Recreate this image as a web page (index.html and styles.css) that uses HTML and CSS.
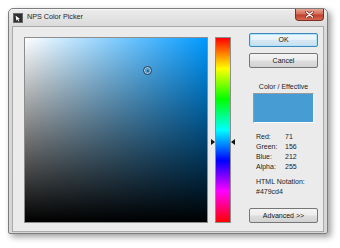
FILE: index.html
```html
<!DOCTYPE html>
<html>
<head>
<meta charset="utf-8">
<link rel="stylesheet" href="styles.css">
</head>
<body>
<div class="window">
  <div class="titlebar">
    <svg class="appicon" width="10" height="10" viewBox="0 0 10 10">
      <rect x="0" y="0" width="10" height="10" fill="#2e2e2e"/>
      <rect x="0.5" y="0.5" width="9" height="9" fill="none" stroke="#6a6a6a"/>
      <path d="M2.5 2.5 L7 6 L5.3 6.2 L6.3 8 L5.5 8.4 L4.5 6.6 L3.4 7.7 Z" fill="#ffffff"/>
    </svg>
    <span class="title">NPS Color Picker</span>
    <div class="close">
      <svg width="9" height="7" viewBox="0 0 9 7">
        <path d="M1.5 1 L7.5 6 M7.5 1 L1.5 6" stroke="#6b2018" stroke-width="2.6" stroke-linecap="round"/>
        <path d="M1.5 1 L7.5 6 M7.5 1 L1.5 6" stroke="#ffffff" stroke-width="1.4" stroke-linecap="round"/>
      </svg>
    </div>
  </div>
  <div class="client">
    <div class="field"><div class="cursor"></div></div>
    <div class="huecol">
      <div class="strip"></div>
      <span class="arrow arrow-left"></span>
      <span class="arrow arrow-right"></span>
    </div>
    <div class="panel">
      <button class="btn btn-default">OK</button>
      <button class="btn btn-cancel">Cancel</button>
      <div class="caption">Color / Effective</div>
      <div class="swatch"></div>
      <div class="values">
        <div class="row"><span class="lbl">Red:</span><span class="val">71</span></div>
        <div class="row"><span class="lbl">Green:</span><span class="val">156</span></div>
        <div class="row"><span class="lbl">Blue:</span><span class="val">212</span></div>
        <div class="row"><span class="lbl">Alpha:</span><span class="val">255</span></div>
      </div>
      <div class="notation">HTML Notation:</div>
      <div class="hex">#479cd4</div>
      <button class="btn btn-adv">Advanced &gt;&gt;</button>
    </div>
  </div>
</div>
</body>
</html>
```
FILE: styles.css
```css
html, body {
  margin: 0;
  padding: 0;
  background: #ffffff;
}
body {
  width: 340px;
  height: 248px;
  overflow: hidden;
  font-family: "Liberation Sans", Arial, sans-serif;
}
.window {
  box-sizing: border-box;
  margin: 8px 0 0 8px;
  width: 320px;
  height: 226px;
  border: 1px solid #7d7d7d;
  border-radius: 5px 5px 2px 2px;
  padding: 0 3px 1px 3px;
  background: linear-gradient(#ececec, #dadada 18px, #d6d6d6);
  box-shadow: 3px 3px 6px rgba(0, 0, 0, 0.38), inset 0 1px 0 #f8f8f8;
  display: flex;
  flex-direction: column;
}
.titlebar {
  height: 17px;
  display: flex;
  align-items: flex-start;
  margin: 0 -3px;
  padding-left: 4px;
}
.appicon {
  margin-top: 4px;
  flex: none;
}
.title {
  margin-left: 4px;
  margin-top: 4px;
  font-size: 7.2px;
  line-height: 8px;
  color: #1e1e1e;
}
.close {
  margin-left: auto;
  margin-right: 3px;
  width: 29px;
  height: 12px;
  box-sizing: border-box;
  border: 1px solid #7e2e22;
  border-top: none;
  border-radius: 0 0 4px 4px;
  background: linear-gradient(#e9a595, #d26d58 45%, #c0402c 55%, #d46a50);
  display: flex;
  align-items: center;
  justify-content: center;
}
.client {
  flex: 1;
  box-sizing: border-box;
  border: 1px solid #a9a9a9;
  background: #ebebeb;
  display: flex;
  align-items: flex-start;
  padding: 6px 5px 0 11px;
}
.field {
  position: relative;
  box-sizing: border-box;
  flex: none;
  width: 184px;
  height: 186px;
  margin-top: 4px;
  border: 1px solid #8d8d8d;
  background:
    linear-gradient(to top, #000000, rgba(0, 0, 0, 0)),
    linear-gradient(to right, #ffffff, #0099ff);
}
.cursor {
  position: absolute;
  left: 118px;
  top: 28px;
  width: 9px;
  height: 9px;
  box-sizing: border-box;
  border: 1px solid #2c3e50;
  border-radius: 50%;
  box-shadow: inset 0 0 0 1px rgba(230, 240, 250, 0.7);
}
.cursor::after {
  content: "";
  position: absolute;
  left: 2.5px;
  top: 2.5px;
  width: 2px;
  height: 2px;
  border-radius: 50%;
  background: #3a5870;
}
.huecol {
  position: relative;
  flex: none;
  width: 27px;
  height: 186px;
  margin-top: 4px;
}
.strip {
  box-sizing: border-box;
  margin-left: 7px;
  width: 16px;
  height: 186px;
  border: 1px solid #8d8d8d;
  background: linear-gradient(to bottom, #ff0000, #ffff00, #00ff00, #00ffff, #0000ff, #ff00ff, #ff0000);
}
.arrow {
  position: absolute;
  top: 102px;
  width: 0;
  height: 0;
  border-top: 3.5px solid transparent;
  border-bottom: 3.5px solid transparent;
}
.arrow-left {
  left: 3px;
  border-left: 4px solid #111111;
}
.arrow-right {
  left: 23px;
  border-right: 4px solid #111111;
}
.panel {
  flex: none;
  width: 69px;
  margin-left: 14px;
  display: flex;
  flex-direction: column;
  font-size: 7px;
  color: #1c1c1c;
}
.btn {
  display: block;
  box-sizing: border-box;
  width: 69px;
  height: 15px;
  padding: 0;
  border: 1px solid #767676;
  border-radius: 2px;
  background: linear-gradient(#f4f4f4 0%, #ececec 48%, #dedede 52%, #d2d2d2 100%);
  font-family: "Liberation Sans", Arial, sans-serif;
  font-size: 7px;
  color: #151515;
  text-align: center;
  line-height: 12px;
}
.btn-default {
  height: 14px;
  border-color: #3f89bd;
  box-shadow: inset 0 0 0 1px #aee3fa;
  background: linear-gradient(#f0f8fc 0%, #e6f2f9 48%, #d6e8f3 52%, #c8dfee 100%);
}
.btn-cancel {
  margin-top: 6px;
}
.caption {
  margin-top: 14px;
  line-height: 10px;
  text-align: center;
}
.swatch {
  box-sizing: border-box;
  margin: 1px 0 0 4px;
  width: 61px;
  height: 30px;
  background: #479cd4;
  border: 1px solid;
  border-color: #9a9a9a #f6f6f6 #ffffff #9a9a9a;
}
.values {
  margin-top: 9px;
  padding-left: 7px;
}
.row {
  display: flex;
  line-height: 10px;
}
.lbl {
  width: 29px;
}
.notation {
  margin-top: 5px;
  padding-left: 7px;
  line-height: 10px;
}
.hex {
  padding-left: 7px;
  line-height: 10px;
}
.btn-adv {
  margin-top: 11px;
  height: 15px;
}
```
